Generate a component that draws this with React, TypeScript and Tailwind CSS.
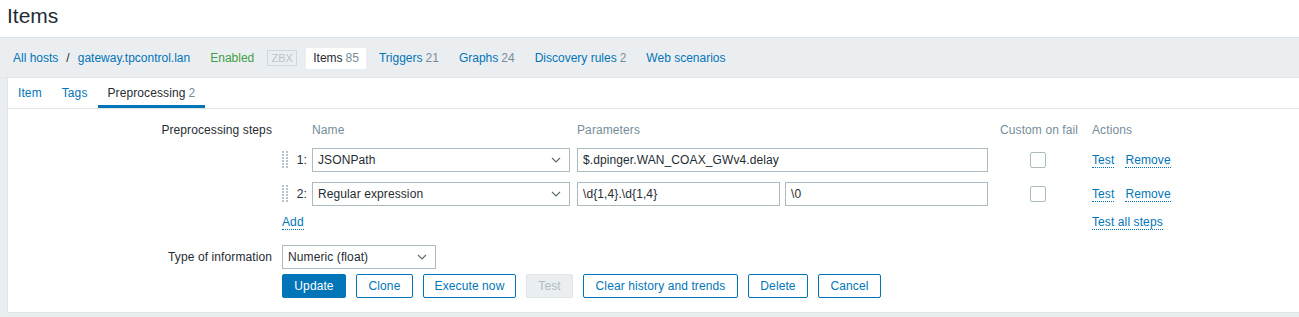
import React from "react";

const Chevron = () => (
  <svg width="10" height="6" viewBox="0 0 10 6" className="shrink-0">
    <path d="M1 1 L5 5 L9 1" fill="none" stroke="#5f6d75" strokeWidth="1.2" />
  </svg>
);

const Select = ({ value, w }: { value: string; w: string }) => (
  <div
    className={`${w} h-[24px] border border-[#acbbc2] bg-white flex items-center justify-between pl-[5px] pr-[8px]`}
  >
    <span>{value}</span>
    <Chevron />
  </div>
);

const Input = ({ value, w }: { value: string; w: string }) => (
  <div className={`${w} h-[24px] border border-[#acbbc2] bg-white flex items-center pl-[5px]`}>
    <span>{value}</span>
  </div>
);

const Handle = () => (
  <svg width="6" height="18" viewBox="0 0 6 18" className="shrink-0">
    {[0, 1, 2, 3, 4, 5].map((r) =>
      [0, 1].map((c) => (
        <rect key={`${r}-${c}`} x={c * 4} y={r * 3} width="2" height="2" fill="#b6c3c9" />
      ))
    )}
  </svg>
);

const Checkbox = () => (
  <div className="w-[16px] h-[16px] border border-[#acbbc2] rounded-[2px] bg-white" />
);

const DLink = ({ children, cls = "" }: { children: React.ReactNode; cls?: string }) => (
  <span className={`text-[#0275b8] border-b border-dotted border-[#0275b8] leading-[14px] ${cls}`}>
    {children}
  </span>
);

const Btn = ({
  children,
  w,
  kind = "out",
}: {
  children: React.ReactNode;
  w: string;
  kind?: "pri" | "out" | "dis";
}) => {
  const c =
    kind === "pri"
      ? "bg-[#0275b8] border-[#0275b8] text-white"
      : kind === "dis"
      ? "bg-[#ebeef0] border-[#dfe4e7] text-[#acbbc2]"
      : "bg-white border-[#0275b8] text-[#0275b8]";
  return (
    <div className={`${w} h-[24px] border rounded-[2px] flex items-center justify-center ${c}`}>{children}</div>
  );
};

export default function App() {
  return (
    <div className="w-[1299px] h-[317px] overflow-hidden bg-[#ebeef0] text-[12px] text-[#1f2c33] font-['Liberation_Sans',Arial,sans-serif] tracking-[0.1px]">
      {/* Header */}
      <div className="h-[38px] bg-white border-b border-[#dfe4e7] pl-[7px] pt-[4px]">
        <h1 className="text-[21px] leading-[24px] font-normal tracking-normal">Items</h1>
      </div>

      {/* Breadcrumb nav */}
      <div className="h-[40px] flex items-center pl-[13px] pt-[1px] border-b border-[#dfe4e7] tracking-normal">
        <span className="text-[#0275b8]">All hosts</span>
        <span className="mx-[8px] text-[#1f2c33]">/</span>
        <span className="text-[#0275b8]">gateway.tpcontrol.lan</span>
        <span className="ml-[20px] text-[#429e47]">Enabled</span>
        <span className="ml-[13px] w-[30px] h-[16px] border border-[#cfd8dc] text-[#b8c4ca] text-[11px] leading-[14px] flex items-center justify-center">
          ZBX
        </span>
        <div className="ml-[9px] flex items-center gap-[6px]">
          <span className="h-[21px] px-[7px] bg-white flex items-center">
            Items<span className="ml-[3px] text-[#768d99]">85</span>
          </span>
          <span className="px-[7px] text-[#0275b8]">
            Triggers<span className="ml-[3px] text-[#768d99]">21</span>
          </span>
          <span className="px-[7px] text-[#0275b8]">
            Graphs<span className="ml-[3px] text-[#768d99]">24</span>
          </span>
          <span className="px-[7px] text-[#0275b8]">
            Discovery rules<span className="ml-[3px] text-[#768d99]">2</span>
          </span>
          <span className="px-[7px] text-[#0275b8]">Web scenarios</span>
        </div>
      </div>

      {/* Panel */}
      <div className="ml-[7px] h-[235px] bg-white border-l border-b border-[#dfe4e7]">
        {/* Tabs */}
        <div className="h-[31px] flex border-b border-[#dfe4e7]">
          <div className="px-[10px] flex items-center text-[#0275b8]">Item</div>
          <div className="px-[10px] flex items-center text-[#0275b8]">Tags</div>
          <div className="px-[10px] flex items-center border-b-[3px] border-[#0275b8] pt-[3px]">
            Preprocessing<span className="ml-[3px] text-[#768d99]">2</span>
          </div>
        </div>

        {/* Form */}
        <div className="pt-[9px]">
          {/* Preprocessing steps */}
          <div className="flex">
            <div className="w-[264px] h-[24px] flex items-center justify-end">Preprocessing steps</div>
            <div className="ml-[10px] flex flex-col">
              <div className="h-[24px] flex items-center text-[#768d99]">
                <div className="w-[30px]" />
                <div className="w-[265px]">Name</div>
                <div className="w-[423px]">Parameters</div>
                <div className="w-[92px]">Custom on fail</div>
                <div>Actions</div>
              </div>

              <div className="mt-[6px] h-[24px] flex items-center">
                <div className="w-[30px] flex items-center justify-between pr-[5px]">
                  <Handle />
                  <span>1:</span>
                </div>
                <Select value="JSONPath" w="w-[258px]" />
                <div className="ml-[7px]">
                  <Input value="$.dpinger.WAN_COAX_GWv4.delay" w="w-[411px]" />
                </div>
                <div className="ml-[42px]">
                  <Checkbox />
                </div>
                <div className="ml-[46px] flex items-center">
                  <DLink>Test</DLink>
                  <DLink cls="ml-[11px]">Remove</DLink>
                </div>
              </div>

              <div className="mt-[10px] h-[24px] flex items-center">
                <div className="w-[30px] flex items-center justify-between pr-[5px]">
                  <Handle />
                  <span>2:</span>
                </div>
                <Select value="Regular expression" w="w-[258px]" />
                <div className="ml-[7px]">
                  <Input value="\d{1,4}.\d{1,4}" w="w-[203px]" />
                </div>
                <div className="ml-[5px]">
                  <Input value="\0" w="w-[203px]" />
                </div>
                <div className="ml-[42px]">
                  <Checkbox />
                </div>
                <div className="ml-[46px] flex items-center">
                  <DLink>Test</DLink>
                  <DLink cls="ml-[11px]">Remove</DLink>
                </div>
              </div>

              <div className="mt-[4px] h-[24px] flex items-center">
                <div className="w-[810px]">
                  <DLink>Add</DLink>
                </div>
                <DLink>Test all steps</DLink>
              </div>
            </div>
          </div>

          {/* Type of information */}
          <div className="mt-[11px] flex">
            <div className="w-[264px] h-[24px] flex items-center justify-end">Type of information</div>
            <div className="ml-[10px]">
              <Select value="Numeric (float)" w="w-[154px]" />
            </div>
          </div>

          {/* Buttons */}
          <div className="mt-[5px] flex">
            <div className="w-[264px]" />
            <div className="ml-[10px] flex gap-[10px]">
              <Btn kind="pri" w="w-[64px]">Update</Btn>
              <Btn w="w-[57px]">Clone</Btn>
              <Btn w="w-[93px]">Execute now</Btn>
              <Btn kind="dis" w="w-[47px]">Test</Btn>
              <Btn w="w-[155px]">Clear history and trends</Btn>
              <Btn w="w-[60px]">Delete</Btn>
              <Btn w="w-[63px]">Cancel</Btn>
            </div>
          </div>
        </div>
      </div>
    </div>
  );
}
